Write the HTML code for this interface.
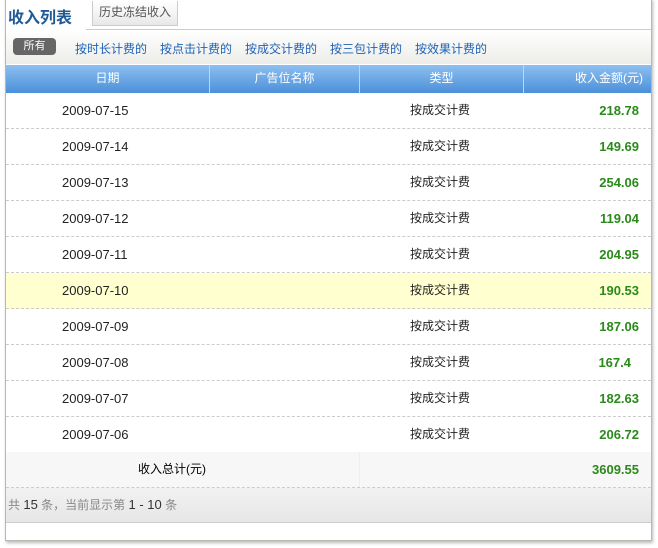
<!DOCTYPE html>
<html><head><meta charset="utf-8"><style>
body{margin:0;width:658px;height:548px;background:#fff;font-family:"Liberation Sans","Noto Sans CJK SC",sans-serif;font-size:12px;position:relative;overflow:hidden}
.frame{position:absolute;left:5px;top:-2px;width:645px;height:541px;border:1px solid #b8b8b0;box-shadow:1px 2px 3px #bbb;background:#fff}
.t1{position:absolute;left:2px;top:5px;font-size:16px;font-weight:bold;color:#1f5a96}
.t2{position:absolute;left:86px;top:2px;width:84px;height:24px;background:linear-gradient(#fff,#e8e8e8);border:1px solid #ccc;border-top:none;color:#555;font-size:12px;text-align:center;line-height:22px}
.tabline{position:absolute;left:0;right:0;top:30px;border-top:1px solid #ccc}
.tabgap{position:absolute;left:0;width:80px;top:29px;height:3px;background:#fff}
.filt{position:absolute;left:0;right:0;top:31px;height:34px;background:linear-gradient(#fff,#ecece8)}
.all{position:absolute;left:7px;top:8px;width:43px;height:17px;background:#666;border-radius:4px;color:#fff;text-align:center;line-height:17px;font-size:11px}
.lk{position:absolute;top:10px;color:#1d62b7;font-size:12px}
.hd{position:absolute;left:0;right:0;top:66px;height:28px;background:linear-gradient(#8dc0f0,#4b8fd9);color:#fff;font-size:12px}
.hd div{position:absolute;top:0;line-height:26px;text-align:center;border-right:1px solid #bcd7f3;height:28px}
.row{position:absolute;left:0;right:0;height:35px;border-bottom:1px dashed #ccc;font-size:13px;color:#222}
.row span{position:absolute;top:0;line-height:35px}
.d{left:56px}.ty{left:404px;font-size:12px}.am{right:12px;color:#2a8a1a;font-weight:bold;font-size:13px}
.y{background:#ffffd0}
.tot{position:absolute;left:0;right:0;top:453px;height:35px;border-bottom:1px dashed #ccc;background:#f7f7f7}
.pg{position:absolute;left:0;right:0;top:489px;height:34px;background:linear-gradient(#f2f2f2,#e6e6e6);border-bottom:1px solid #ccc;color:#888;line-height:34px;font-size:12px;padding-left:2px}
.pg b{color:#333;font-weight:normal;font-size:13px}
</style></head><body>
<div class="frame">
<div class="tabline"></div><div class="tabgap"></div>
<div class="t1">收入列表</div>
<div class="t2">历史冻结收入</div>
<div class="filt"><div class="all">所有</div>
<span class="lk" style="left:69px">按时长计费的</span><span class="lk" style="left:154px">按点击计费的</span><span class="lk" style="left:239px">按成交计费的</span><span class="lk" style="left:324px">按三包计费的</span><span class="lk" style="left:409px">按效果计费的</span></div>
<div class="hd"><div style="left:0;width:203px">日期</div><div style="left:204px;width:149px">广告位名称</div><div style="left:354px;width:163px">类型</div><div style="left:518px;width:127px;border:none;text-align:right;padding-right:8px;box-sizing:border-box">收入金额(元)</div></div>
<div class="row" style="top:94px"><span class="d">2009-07-15</span><span class="ty">按成交计费</span><span class="am">218.78</span></div>
<div class="row" style="top:130px"><span class="d">2009-07-14</span><span class="ty">按成交计费</span><span class="am">149.69</span></div>
<div class="row" style="top:166px"><span class="d">2009-07-13</span><span class="ty">按成交计费</span><span class="am">254.06</span></div>
<div class="row" style="top:202px"><span class="d">2009-07-12</span><span class="ty">按成交计费</span><span class="am">119.04</span></div>
<div class="row" style="top:238px"><span class="d">2009-07-11</span><span class="ty">按成交计费</span><span class="am">204.95</span></div>
<div class="row y" style="top:274px"><span class="d">2009-07-10</span><span class="ty">按成交计费</span><span class="am">190.53</span></div>
<div class="row" style="top:310px"><span class="d">2009-07-09</span><span class="ty">按成交计费</span><span class="am">187.06</span></div>
<div class="row" style="top:346px"><span class="d">2009-07-08</span><span class="ty">按成交计费</span><span class="am" style="right:20px">167.4</span></div>
<div class="row" style="top:382px"><span class="d">2009-07-07</span><span class="ty">按成交计费</span><span class="am">182.63</span></div>
<div class="row" style="top:418px"><span class="d">2009-07-06</span><span class="ty">按成交计费</span><span class="am">206.72</span></div>
<div class="tot"><span style="position:absolute;left:132px;line-height:35px;font-size:12px">收入总计(元)</span><span style="position:absolute;left:353px;top:0;height:35px;border-left:1px solid #eee"></span><span style="position:absolute;right:12px;line-height:35px;color:#2a8a1a;font-weight:bold;font-size:13px">3609.55</span></div>
<div class="pg">共 <b>15</b> 条，当前显示第 <b>1 - 10</b> 条</div>
</div>
</body></html>
